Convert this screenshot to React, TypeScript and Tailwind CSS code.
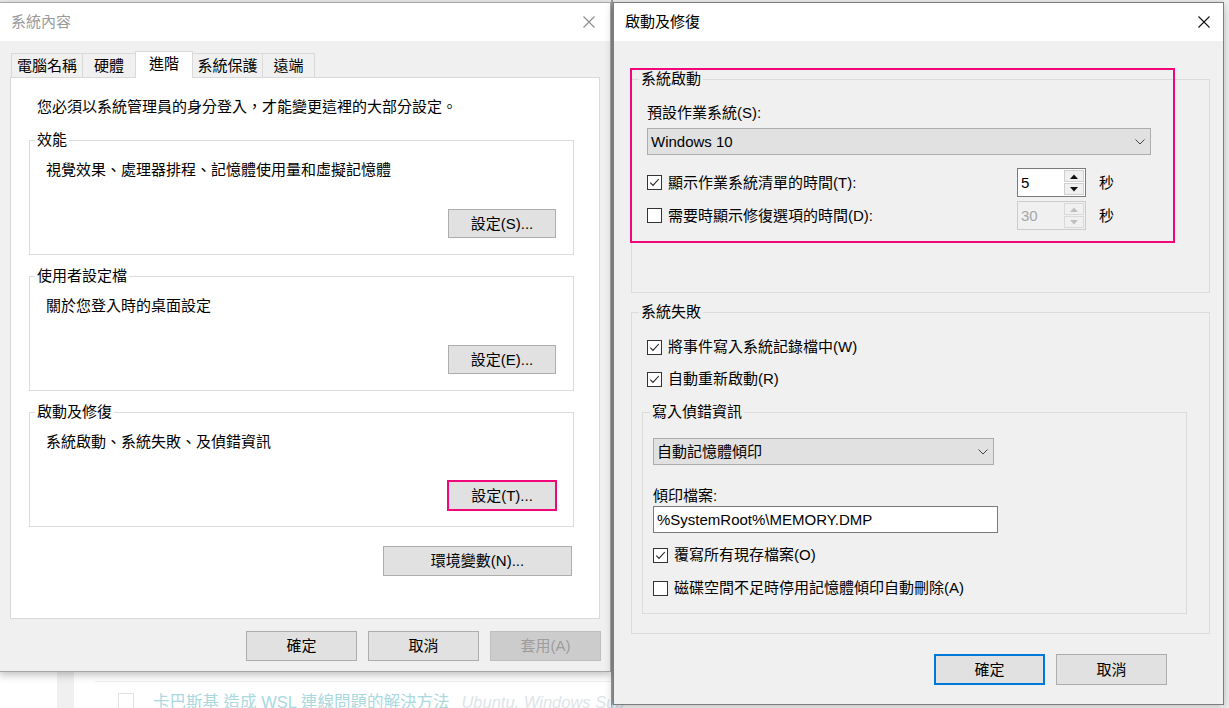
import React from 'react';

type BtnProps = { label: string; className?: string; disabled?: boolean; isDefault?: boolean };

function WinButton({ label, className = '', disabled = false, isDefault = false }: BtnProps) {
  let tone = 'bg-[#e1e1e1] border border-[#adadad] text-black';
  if (disabled) tone = 'bg-[#cccccc] border border-[#bfbfbf] text-[#9d9d9d]';
  if (isDefault) tone = 'bg-[#e1e1e1] border-2 border-[#0078d7] text-black';
  return (
    <div className={`flex items-center justify-center leading-[20px] ${tone} ${className}`}>{label}</div>
  );
}

function CloseIcon({ color }: { color: string }) {
  return (
    <svg width="12" height="12" viewBox="0 0 12 12">
      <path d="M0.5 0.5 L11.5 11.5 M11.5 0.5 L0.5 11.5" stroke={color} strokeWidth="1.1" fill="none" />
    </svg>
  );
}

function GroupBox({
  title,
  className = '',
  legendClass = 'ml-[7px]',
  children,
}: {
  title: string;
  className?: string;
  legendClass?: string;
  children: React.ReactNode;
}) {
  return (
    <fieldset className={`flex flex-col border border-[#dcdcdc] ${className}`}>
      <legend className={`px-[2px] leading-[20px] ${legendClass}`}>{title}</legend>
      {children}
    </fieldset>
  );
}

function CheckBox({ checked, label, className = '' }: { checked: boolean; label: string; className?: string }) {
  return (
    <div className={`flex h-[20px] items-center leading-[20px] ${className}`}>
      <span className="flex h-[15px] w-[15px] shrink-0 items-center justify-center border border-[#333333] bg-white">
        {checked && (
          <svg width="13" height="13" viewBox="0 0 13 13">
            <path d="M2.3 6.6 L5 9.4 L10.8 3" stroke="#222222" strokeWidth="1.1" fill="none" />
          </svg>
        )}
      </span>
      <span className="ml-[6px] whitespace-nowrap">{label}</span>
    </div>
  );
}

function Chevron() {
  return (
    <svg width="10" height="6" viewBox="0 0 10 6">
      <path d="M0.5 0.5 L5 5 L9.5 0.5" stroke="#444444" strokeWidth="1" fill="none" />
    </svg>
  );
}

function Select({ value, className = '' }: { value: string; className?: string }) {
  return (
    <div
      className={`flex items-center justify-between border border-[#adadad] bg-[#e1e1e1] pl-[3px] pr-[5px] leading-[20px] ${className}`}
    >
      <span>{value}</span>
      <Chevron />
    </div>
  );
}

function Arrow({ up, color }: { up: boolean; color: string }) {
  return (
    <svg width="8" height="5" viewBox="0 0 8 5">
      <path d={up ? 'M0 5 L4 0.5 L8 5 Z' : 'M0 0 L8 0 L4 4.5 Z'} fill={color} />
    </svg>
  );
}

function Spin({ value, disabled = false }: { value: string; disabled?: boolean }) {
  const box = disabled ? 'border-[#cccccc] bg-[#f0f0f0] text-[#a6a6a6]' : 'border-[#7a7a7a] bg-white text-black';
  const arrowColor = disabled ? '#bfbfbf' : '#111111';
  const btn = disabled ? 'border-[#d9d9d9]' : 'border-[#cfcfcf]';
  return (
    <div className={`flex h-[29px] w-[69px] border ${box}`}>
      <div className="flex flex-1 items-center pl-[3px] leading-[20px]">{value}</div>
      <div className="flex w-[22px] flex-col gap-px p-px">
        <div className={`flex flex-1 items-center justify-center border bg-[#f0f0f0] ${btn}`}>
          <Arrow up color={arrowColor} />
        </div>
        <div className={`flex flex-1 items-center justify-center border bg-[#f0f0f0] ${btn}`}>
          <Arrow up={false} color={arrowColor} />
        </div>
      </div>
    </div>
  );
}

const tabs = [
  { label: '電腦名稱', cls: 'w-[72px] h-[24px] bg-[#f0f0f0]' },
  { label: '硬體', cls: 'w-[54px] h-[24px] bg-[#f0f0f0] -ml-px' },
  { label: '進階', cls: 'w-[58px] h-[27px] bg-white -ml-px -mb-px relative z-10 pb-[3px]' },
  { label: '系統保護', cls: 'w-[71px] h-[24px] bg-[#f0f0f0] -ml-px' },
  { label: '遠端', cls: 'w-[53px] h-[24px] bg-[#f0f0f0] -ml-px' },
];

function SystemProperties() {
  return (
    <div className="absolute left-[-1px] top-[2px] flex h-[670px] w-[612px] flex-col border border-[#a6a6a6] bg-[#f0f0f0] shadow-[0_3px_8px_rgba(0,0,0,0.25)]">
      <div className="flex h-[38px] shrink-0 items-center justify-between bg-white pl-[11px] pr-[15px]">
        <span className="leading-[20px] text-[#9a9a9a]">系統內容</span>
        <CloseIcon color="#8c8c8c" />
      </div>

      <div className="flex flex-col pt-[10px]">
        <div className="flex h-[26px] items-end pl-[11px]">
          {tabs.map((t) => (
            <div
              key={t.label}
              className={`flex items-center justify-center border border-b-0 border-[#d9d9d9] leading-[20px] ${t.cls}`}
            >
              {t.label}
            </div>
          ))}
        </div>

        <div className="ml-[10px] flex h-[542px] w-[590px] flex-col border border-[#d9d9d9] bg-white">
          <div className="ml-[26px] mt-[19px] leading-[20px]">您必須以系統管理員的身分登入，才能變更這裡的大部分設定。</div>

          <GroupBox title="效能" legendClass="ml-[5px]" className="ml-[18px] mt-[13px] w-[545px]">
            <div className="ml-[16px] mt-[10px] leading-[20px]">視覺效果、處理器排程、記憶體使用量和虛擬記憶體</div>
            <WinButton label="設定(S)..." className="mb-[16px] mr-[17px] mt-[29px] h-[29px] w-[108px] self-end" />
          </GroupBox>

          <GroupBox title="使用者設定檔" legendClass="ml-[5px]" className="ml-[18px] mt-[11px] w-[545px]">
            <div className="ml-[16px] mt-[10px] leading-[20px]">關於您登入時的桌面設定</div>
            <WinButton label="設定(E)..." className="mb-[16px] mr-[17px] mt-[29px] h-[29px] w-[108px] self-end" />
          </GroupBox>

          <GroupBox title="啟動及修復" legendClass="ml-[5px]" className="ml-[18px] mt-[11px] w-[545px]">
            <div className="ml-[16px] mt-[10px] leading-[20px]">系統啟動、系統失敗、及偵錯資訊</div>
            <WinButton
              label="設定(T)..."
              className="mb-[16px] mr-[17px] mt-[29px] h-[29px] w-[108px] self-end outline-2 outline-offset-[-1px] outline-[#f2077a]"
            />
          </GroupBox>

          <WinButton label="環境變數(N)..." className="mr-[27px] mt-[19px] h-[30px] w-[189px] self-end" />
        </div>

        <div className="mt-[12px] flex justify-end gap-[11px] pr-[9px]">
          <WinButton label="確定" className="h-[30px] w-[111px]" />
          <WinButton label="取消" className="h-[30px] w-[111px]" />
          <WinButton label="套用(A)" disabled className="h-[30px] w-[111px]" />
        </div>
      </div>
    </div>
  );
}

function StartupRecovery() {
  return (
    <div className="absolute left-[613px] top-[2px] flex h-[703px] w-[611px] flex-col border border-[#7d7d7d] bg-[#f0f0f0] shadow-[0_3px_8px_rgba(0,0,0,0.25)]">
      <div className="flex h-[38px] shrink-0 items-center justify-between bg-white pl-[11px] pr-[13px]">
        <span className="leading-[20px]">啟動及修復</span>
        <CloseIcon color="#111111" />
      </div>

      <GroupBox title="系統啟動" className="ml-[17px] mt-[28px] w-[579px] pb-[62px]">
        <div className="ml-[15px] mt-[14px] leading-[20px]">預設作業系統(S):</div>
        <Select value="Windows 10" className="ml-[15px] mt-[5px] h-[27px] w-[504px]" />
        <div className="ml-[15px] mt-[13px] flex h-[29px] items-center">
          <CheckBox checked label="顯示作業系統清單的時間(T):" className="w-[370px]" />
          <Spin value="5" />
          <span className="ml-[13px] leading-[20px]">秒</span>
        </div>
        <div className="ml-[15px] mt-[4px] flex h-[29px] items-center">
          <CheckBox checked={false} label="需要時顯示修復選項的時間(D):" className="w-[370px]" />
          <Spin value="30" disabled />
          <span className="ml-[13px] leading-[20px]">秒</span>
        </div>
      </GroupBox>

      <GroupBox title="系統失敗" className="ml-[17px] mt-[9px] w-[579px] pb-[19px]">
        <CheckBox checked label="將事件寫入系統記錄檔中(W)" className="ml-[15px] mt-[15px]" />
        <CheckBox checked label="自動重新啟動(R)" className="ml-[15px] mt-[12px]" />

        <GroupBox title="寫入偵錯資訊" className="ml-[10px] mt-[13px] w-[545px] pb-[15px]">
          <Select value="自動記憶體傾印" className="ml-[10px] mt-[16px] h-[27px] w-[341px]" />
          <div className="ml-[10px] mt-[21px] leading-[20px]">傾印檔案:</div>
          <div className="ml-[10px] flex h-[27px] w-[345px] items-center border border-[#7a7a7a] bg-white pl-[3px] leading-[20px]">
            %SystemRoot%\MEMORY.DMP
          </div>
          <CheckBox checked label="覆寫所有現存檔案(O)" className="ml-[10px] mt-[12px]" />
          <CheckBox checked={false} label="磁碟空間不足時停用記憶體傾印自動刪除(A)" className="ml-[10px] mt-[13px]" />
        </GroupBox>
      </GroupBox>

      <div className="mt-[20px] flex justify-end gap-[11px] pr-[56px]">
        <WinButton label="確定" isDefault className="h-[31px] w-[111px]" />
        <WinButton label="取消" className="h-[31px] w-[111px]" />
      </div>
    </div>
  );
}

export default function App() {
  return (
    <div className="relative h-[708px] w-[1229px] overflow-hidden bg-white font-['Liberation_Sans','Noto_Sans_CJK_TC',sans-serif] text-[15px] text-black">
      {/* desktop page behind the dialogs */}
      <div className="absolute left-0 top-0 h-[2px] w-full bg-[#e9e9e9]" />
      <div className="absolute left-[611px] top-0 h-full w-[2px] bg-[#9a9a9a]" />
      <div className="absolute right-0 top-0 h-full w-[6px] bg-[#f0f0f0]" />
      <div className="absolute left-[57px] top-[672px] h-[36px] w-[17px] bg-[#f0f0f0]" />
      <div className="absolute left-[95px] top-[681px] h-px w-[516px] bg-[#f0f0f0]" />
      <div className="absolute left-[118px] top-[693px] h-[16px] w-[16px] border border-[#e2e2e2]" />
      <div className="absolute left-[153px] top-[691px] whitespace-nowrap text-[16.5px] leading-[22px] text-[#a9d9de]">
        卡巴斯基 造成 WSL 連線問題的解決方法
        <span className="ml-[12px] italic text-[#dde4e8]">Ubuntu, Windows Sub</span>
      </div>

      <SystemProperties />
      <StartupRecovery />

      {/* highlight frame drawn over the dialog */}
      <div className="pointer-events-none absolute left-[630px] top-[68px] h-[175px] w-[545px] border-2 border-[#f2077a]" />
    </div>
  );
}
